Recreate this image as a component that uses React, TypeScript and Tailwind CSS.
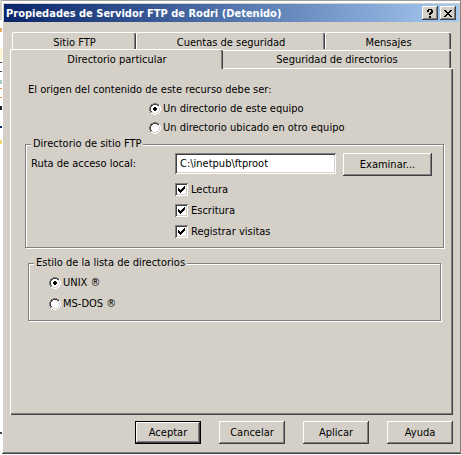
import { useState } from "react";
import type { InputHTMLAttributes, ReactNode } from "react";

const raised =
  "bg-[#d4d0c8] shadow-[inset_-1px_-1px_0_#404040,inset_1px_1px_0_#ffffff,inset_-2px_-2px_0_#808080]";

function PushButton({ children, wide = false, primary = false }: { children: ReactNode; wide?: boolean; primary?: boolean }) {
  return (
    <button
      type="button"
      className={`h-[23px] shrink-0 text-center ${wide ? "w-[89px]" : "w-[66px]"} ${raised} ${
        primary ? "border border-black" : ""
      }`}
    >
      {children}
    </button>
  );
}

function Radio({ label, ...input }: { label: string } & InputHTMLAttributes<HTMLInputElement>) {
  return (
    <label className="flex h-4 items-center gap-[2px]">
      <span className="grid size-3 place-items-center">
        <input type="radio" className="peer col-start-1 row-start-1 size-3 appearance-none" {...input} />
        <svg viewBox="0 0 12 12" className="pointer-events-none col-start-1 row-start-1 size-3" shapeRendering="crispEdges">
          <path fill="#fff" d="M4 1h4v1h2v2h1v4h-1v2H8v1H4v-1H2V8H1V4h1V2h2z" />
          <path fill="#808080" d="M4 0h4v1H4zM2 1h2v1H2zM8 1h2v1H8zM1 2h1v2H1zM0 4h1v4H0zM1 8h1v2H1z" />
          <path fill="#404040" d="M4 1h4v1H4zM2 2h2v1H2zM8 2h2v1H8zM2 3h1v1H2zM1 4h1v4H1zM2 8h1v1H2z" />
          <path fill="#d4d0c8" d="M9 3h1v1H9zM10 4h1v4h-1zM9 8h1v1H9zM8 9h2v1H8zM4 10h4v1H4zM2 9h2v1H2z" />
          <path fill="#fff" d="M10 2h1v2h-1zM11 4h1v4h-1zM10 8h1v2h-1zM8 10h2v1H8zM4 11h4v1H4zM2 10h2v1H2z" />
        </svg>
        <svg viewBox="0 0 4 4" className="pointer-events-none invisible col-start-1 row-start-1 size-1 peer-checked:visible" shapeRendering="crispEdges">
          <path d="M1 0h2v1h1v2H3v1H1V3H0V1h1z" />
        </svg>
      </span>
      {label}
    </label>
  );
}

function Check({ label }: { label: string }) {
  return (
    <label className="flex h-[21px] items-center gap-[3px]">
      <span className="grid size-[13px] place-items-center">
        <input
          type="checkbox"
          defaultChecked
          className="peer col-start-1 row-start-1 size-[13px] appearance-none bg-white shadow-[inset_1px_1px_0_#808080,inset_-1px_-1px_0_#ffffff,inset_2px_2px_0_#404040,inset_-2px_-2px_0_#d4d0c8]"
        />
        <svg viewBox="0 0 7 7" className="pointer-events-none invisible col-start-1 row-start-1 size-[7px] peer-checked:visible" shapeRendering="crispEdges">
          <path d="M0 2h1v1h1v1h1V3h1V2h1V1h1V0h1v3H6v1H5v1H4v1H3v1H2V6H1V5H0z" />
        </svg>
      </span>
      {label}
    </label>
  );
}

function WindowBehind() {
  return (
    <div aria-hidden="true" className="flex w-[2px] shrink-0 flex-col bg-white">
      <div className="h-5 bg-[#d4d0c8]" />
      <div className="mt-2 h-1 bg-[#e0b060]" />
      <div className="mt-4 h-3 bg-[#fff4d0]" />
      <div className="mt-[2px] h-px bg-[#404040]" />
      <div className="mt-2 h-px bg-[#404040]" />
      <div className="mt-2 h-1 bg-[#a8c8c8]" />
      <div className="mt-1 h-px bg-[#e09040]" />
      <div className="mt-2 h-px bg-[#e09040]" />
      <div className="mt-2 h-1 bg-[#202020]" />
      <div className="mt-4 h-[2px] bg-[#0a246a]" />
      <div className="mt-3 h-1 bg-[#f0d878]" />
      <div className="mt-auto mb-5 h-[2px] bg-[#404040]" />
    </div>
  );
}

const tab =
  "rounded-t-[2px] border-t border-l border-white text-center shadow-[inset_-1px_0_0_#404040,inset_-2px_0_0_#808080]";

const group =
  "border border-[#808080] shadow-[inset_1px_1px_0_#ffffff,1px_1px_0_#ffffff]";

export default function App() {
  const [origin, setOrigin] = useState("local");
  const [style, setStyle] = useState("unix");

  return (
    <main className="flex bg-white pb-px font-['DejaVu_Sans_Condensed','DejaVu_Sans',sans-serif] text-[11px] leading-4 text-black">
      <WindowBehind />
      <section
        aria-labelledby="title"
        className="flex-1 border-t border-r border-b border-t-[#a0a0a0] border-r-[#808080] border-b-[#404040] bg-[#d4d0c8] pt-[3px] pr-px pb-[9px] pl-[2px] shadow-[inset_1px_2px_0_#ffffff,inset_0_-1px_0_#808080]"
      >
        <header className="flex h-[18px] items-center bg-linear-to-r from-[#0a246a] to-[#a6caf0] pr-[3px] pl-[2px]">
          <h1 id="title" className="flex-1 pt-px font-bold whitespace-nowrap text-white">
            Propiedades de Servidor FTP de Rodri (Detenido)
          </h1>
          <div className="flex gap-[2px]">
            <button type="button" aria-label="Ayuda" className={`grid h-[14px] w-4 place-items-center ${raised}`}>
              <svg viewBox="0 0 6 9" className="h-[9px] w-[6px]" shapeRendering="crispEdges">
                <path d="M1 0h4v1h1v3H5v1H4v1H2V4h1V3h1V1H2v2H0V1h1zM2 7h2v2H2z" />
              </svg>
            </button>
            <button type="button" aria-label="Cerrar" className={`grid h-[14px] w-4 place-items-center ${raised}`}>
              <svg viewBox="0 0 8 7" className="h-[7px] w-2" shapeRendering="crispEdges">
                <path d="M0 0h2v1h1v1h2V1h1V0h2v1H7v1H6v1H5v1h1v1h1v1h1v1H6V6H5V5H3v1H2v1H0V6h1V5h1V4h1V3H2V2H1V1H0z" />
              </svg>
            </button>
          </div>
        </header>

        <div className="pt-[10px] pr-[6px] pl-[6px]">
          <div role="tablist" aria-label="Propiedades">
            <div className="flex h-[17px] pr-[2px] pl-[2px]">
              <button type="button" role="tab" aria-selected={false} className={`w-[124px] pt-[2px] ${tab}`}>
                Sitio FTP
              </button>
              <button type="button" role="tab" aria-selected={false} className={`w-[189px] pt-[2px] ${tab}`}>
                Cuentas de seguridad
              </button>
              <button type="button" role="tab" aria-selected={false} className={`flex-1 pt-[2px] ${tab}`}>
                Mensajes
              </button>
            </div>
            <div className="flex h-5">
              <button type="button" role="tab" aria-selected className={`w-[213px] ${tab}`}>
                Directorio particular
              </button>
              <div className="flex flex-1 border-b border-white pt-px pr-[2px]">
                <button
                  type="button"
                  role="tab"
                  aria-selected={false}
                  className="flex-1 border-t border-white pt-px text-center shadow-[inset_-1px_0_0_#404040,inset_-2px_0_0_#808080]"
                >
                  Seguridad de directorios
                </button>
              </div>
            </div>
          </div>

          <div
            role="tabpanel"
            className="h-[346px] border-l border-white pt-[13px] pr-[9px] pl-[14px] shadow-[inset_-1px_-1px_0_#404040,inset_-2px_-2px_0_#808080]"
          >
            <div role="radiogroup" aria-labelledby="origin">
              <p id="origin" className="pl-[3px]">
                El origen del contenido de este recurso debe ser:
              </p>
              <div className="flex flex-col gap-[3px] pt-[3px] pl-[124px]">
                <Radio label="Un directorio de este equipo" name="origin" checked={origin === "local"} onChange={() => setOrigin("local")} />
                <Radio label="Un directorio ubicado en otro equipo" name="origin" checked={origin === "remote"} onChange={() => setOrigin("remote")} />
              </div>
            </div>

            <fieldset className={`pb-[5px] pl-[5px] ${group}`}>
              <legend className="bg-[#d4d0c8] px-[2px]">Directorio de sitio FTP</legend>
              <div className="flex items-start gap-[7px] pt-px">
                <div className="flex items-center">
                  <label htmlFor="path" className="w-36">
                    Ruta de acceso local:
                  </label>
                  <input
                    id="path"
                    type="text"
                    defaultValue="C:\inetpub\ftproot"
                    className="h-[21px] w-[161px] bg-white px-[5px] shadow-[inset_1px_1px_0_#808080,inset_-1px_-1px_0_#ffffff,inset_2px_2px_0_#404040,inset_-2px_-2px_0_#d4d0c8]"
                  />
                </div>
                <PushButton wide>Examinar...</PushButton>
              </div>
              <div className="flex flex-col pt-[3px] pl-36">
                <Check label="Lectura" />
                <Check label="Escritura" />
                <Check label="Registrar visitas" />
              </div>
            </fieldset>

            <fieldset className={`mt-[7px] mr-[3px] ml-[3px] pb-2 pl-5 ${group}`}>
              <legend className="-ml-[15px] bg-[#d4d0c8] px-[2px]">Estilo de la lista de directorios</legend>
              <div className="flex flex-col gap-[5px] pt-1">
                <Radio label="UNIX ®" name="style" checked={style === "unix"} onChange={() => setStyle("unix")} />
                <Radio label="MS-DOS ®" name="style" checked={style === "dos"} onChange={() => setStyle("dos")} />
              </div>
            </fieldset>
          </div>

          <footer className="flex justify-end gap-[18px] pt-[6px]">
            <PushButton primary>Aceptar</PushButton>
            <PushButton>Cancelar</PushButton>
            <PushButton>Aplicar</PushButton>
            <PushButton>Ayuda</PushButton>
          </footer>
        </div>
      </section>
    </main>
  );
}
